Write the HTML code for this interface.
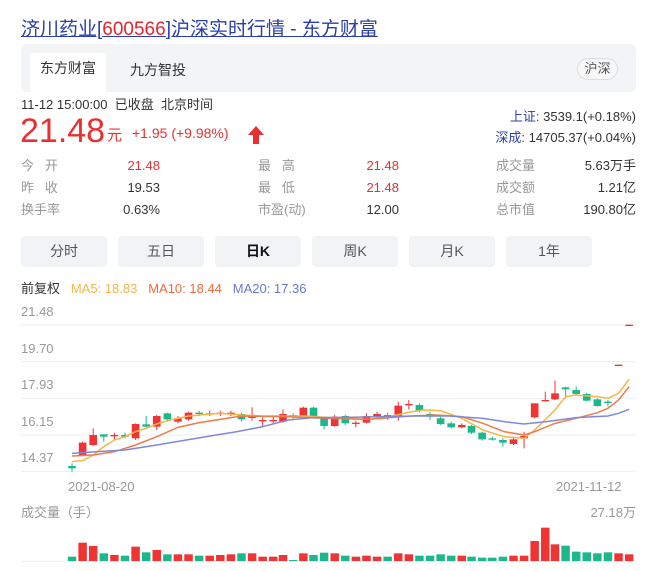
<!DOCTYPE html>
<html><head><meta charset="utf-8"><style>
*{margin:0;padding:0;box-sizing:border-box}
body{width:666px;height:571px;background:#fff;font-family:"Liberation Sans","Noto Sans CJK SC",sans-serif;color:#333;position:relative;overflow:hidden}
.a{position:absolute;white-space:nowrap}
.r{color:#e93030}.g{color:#999}
.tab{position:absolute;top:236px;width:86px;height:31px;background:#f2f3f5;border-radius:4px;text-align:center;line-height:31px;font-size:14px;color:#555}
</style></head><body>
<div class="a" style="left:21px;top:14px;font-size:19px;color:#2a3fa8;text-decoration:underline">济川药业[<span style="color:#e3262d">600566</span>]沪深实时行情 - 东方财富</div>
<div class="a" style="left:21px;top:44px;width:615px;height:48px;background:#f3f4f6;border-radius:6px"></div>
<div class="a" style="left:30px;top:53px;width:76px;height:39px;background:#fff;border-radius:5px 5px 0 0;text-align:center;line-height:31px;font-size:14px;color:#333">东方财富</div>
<div class="a" style="left:130px;top:60px;font-size:14px;color:#333">九方智投</div>
<div class="a" style="left:577px;top:58px;width:41px;height:22px;border:1px solid #ddd;border-radius:11px;background:#f7f7f7;text-align:center;line-height:20px;font-size:13px;color:#555">沪深</div>
<div class="a" style="left:21px;top:94px;font-size:13px;color:#333">11-12 15:00:00&nbsp; 已收盘&nbsp; 北京时间</div>
<div class="a r" style="left:20px;top:112px;font-size:34px;line-height:38px">21.48</div>
<div class="a r" style="left:107px;top:124px;font-size:15px">元</div>
<div class="a r" style="left:132px;top:125px;font-size:14px">+1.95 (+9.98%)</div>
<svg class="a" style="left:248px;top:126px" width="16" height="18" viewBox="0 0 16 18"><path d="M8 0L16 9H11V18H5V9H0Z" fill="#e93030"/></svg>
<div class="a" style="right:30px;top:106px;font-size:13px"><span style="color:#2a3fa8">上证:</span> 3539.1(+0.18%)</div>
<div class="a" style="right:30px;top:127px;font-size:13px"><span style="color:#2a3fa8">深成:</span> 14705.37(+0.04%)</div>
<div class="a g" style="left:21px;top:155px;font-size:13px;line-height:22px">今&nbsp;&nbsp;&nbsp;开<br>昨&nbsp;&nbsp;&nbsp;收<br>换手率</div>
<div class="a" style="right:506px;top:155px;font-size:13px;line-height:22px;text-align:right"><span class="r">21.48</span><br>19.53<br>0.63%</div>
<div class="a g" style="left:258px;top:155px;font-size:13px;line-height:22px">最&nbsp;&nbsp;&nbsp;高<br>最&nbsp;&nbsp;&nbsp;低<br>市盈(动)</div>
<div class="a" style="right:267px;top:155px;font-size:13px;line-height:22px;text-align:right"><span class="r">21.48</span><br><span class="r">21.48</span><br>12.00</div>
<div class="a g" style="left:496px;top:155px;font-size:13px;line-height:22px">成交量<br>成交额<br>总市值</div>
<div class="a" style="right:30px;top:155px;font-size:13px;line-height:22px;text-align:right">5.63万手<br>1.21亿<br>190.80亿</div>
<div class="tab" style="left:21px">分时</div>
<div class="tab" style="left:118px">五日</div>
<div class="tab" style="left:215px;color:#111;font-weight:bold">日K</div>
<div class="tab" style="left:312px">周K</div>
<div class="tab" style="left:409px">月K</div>
<div class="tab" style="left:506px">1年</div>
<div class="a" style="left:21px;top:278px;font-size:13px">前复权&nbsp;&nbsp; <span style="color:#f5b54a">MA5: 18.83</span>&nbsp;&nbsp; <span style="color:#f06a3a">MA10: 18.44</span>&nbsp;&nbsp; <span style="color:#6a78d0">MA20: 17.36</span></div>
<div class="a g" style="left:21px;top:304px;font-size:13px;line-height:16px">21.48</div>
<div class="a g" style="left:21px;top:341px;font-size:13px;line-height:16px">19.70</div>
<div class="a g" style="left:21px;top:377px;font-size:13px;line-height:16px">17.93</div>
<div class="a g" style="left:21px;top:414px;font-size:13px;line-height:16px">16.15</div>
<div class="a g" style="left:21px;top:450px;font-size:13px;line-height:16px">14.37</div>
<div class="a g" style="left:68px;top:479px;font-size:13px;line-height:16px">2021-08-20</div>
<div class="a g" style="left:556px;top:479px;font-size:13px;line-height:16px">2021-11-12</div>
<div class="a g" style="left:21px;top:505px;font-size:13px;line-height:16px">成交量（手）</div>
<div class="a g" style="right:30px;top:505px;font-size:13px;line-height:16px">27.18万</div>
<svg id="c" class="a" style="left:0;top:290px" width="666" height="281" viewBox="0 0 1572 843" preserveAspectRatio="none"></svg>
<script>
var s='';
[105,215,325,435,545].forEach(function(y){s+='<line x1="50" x2="1500" y1="'+y+'" y2="'+y+'" stroke="#eee" vector-effect="non-scaling-stroke"/>';});
s+='<line x1="50" x2="1500" y1="814" y2="814" stroke="#eee" vector-effect="non-scaling-stroke"/>';
var R='#f03434',G='#1ab88a';
var d=[[170,528,535,520,545,0],[195,458,495,455,498,1],[220,435,465,415,468,1],[245,433,440,433,455,0],[270,435,438,428,450,1],[295,435,440,428,445,0],[320,402,445,400,450,1],[345,403,410,378,412,0],[370,378,410,375,420,1],[395,370,388,368,395,0],[420,385,395,378,400,1],[445,368,388,365,392,1],[470,368,372,362,378,0],[495,370,373,362,378,1],[520,368,372,362,378,1],[545,368,372,362,378,1],[570,372,388,368,395,0],[595,380,383,352,392,1],[620,390,393,382,408,1],[645,390,394,380,400,1],[668,372,395,358,398,1],[692,375,380,370,390,0],[716,353,378,350,380,1],[740,353,378,350,380,0],[765,385,408,380,418,0],[790,380,408,375,410,1],[815,378,400,375,405,0],[840,398,402,392,412,1],[865,378,398,370,400,1],[890,372,380,365,385,1],[915,375,382,368,390,0],[940,347,378,335,392,1],[965,342,346,330,358,1],[990,345,362,340,368,0],[1015,372,380,365,390,0],[1040,385,402,380,405,0],[1065,400,412,395,415,0],[1090,405,412,400,415,1],[1113,408,428,405,432,0],[1138,428,448,425,452,0],[1162,445,448,440,452,0],[1187,450,458,445,470,0],[1212,448,462,440,465,1],[1237,438,445,425,475,1],[1262,340,382,340,385,1],[1287,330,333,305,335,1],[1310,310,328,272,330,1],[1335,292,298,290,325,0],[1360,300,312,290,315,0],[1385,312,332,308,335,0],[1410,328,348,325,350,0],[1435,335,338,330,350,0],[1460,224,228,224,228,1],[1485,104,108,104,108,1]];
d.forEach(function(c){var col=c[5]?R:G;s+='<line x1="'+c[0]+'" x2="'+c[0]+'" y1="'+c[3]+'" y2="'+c[4]+'" stroke="'+col+'" vector-effect="non-scaling-stroke"/>';s+='<rect x="'+(c[0]-9)+'" y="'+c[1]+'" width="18" height="'+Math.max(4,c[2]-c[1])+'" fill="'+col+'"/>';});
function pl(p,col){s+='<polyline fill="none" stroke="'+col+'" stroke-width="1.5" vector-effect="non-scaling-stroke" points="'+p.map(function(q){return q.join(',')}).join(' ')+'"/>';}
pl([[170,515],[195,512],[220,495],[245,470],[270,450],[295,440],[320,425],[345,415],[370,402],[395,392],[420,385],[445,378],[470,375],[520,370],[570,375],[620,378],[670,378],[720,378],[770,382],[820,385],[870,388],[920,380],[960,368],[1000,360],[1040,362],[1090,385],[1140,420],[1190,440],[1237,445],[1262,420],[1310,360],[1335,320],[1360,315],[1410,320],[1435,325],[1460,310],[1485,268]],'#f5b54a');
pl([[170,498],[220,495],[270,485],[320,465],[370,440],[420,412],[470,398],[520,388],[570,378],[670,380],[770,385],[870,388],[970,378],[1030,375],[1090,380],[1140,400],[1190,425],[1237,435],[1262,425],[1310,400],[1360,385],[1410,368],[1435,355],[1460,330],[1485,290]],'#f07a4a');
pl([[170,490],[230,485],[295,480],[370,465],[440,450],[510,435],[560,425],[620,410],[680,390],[740,383],[820,382],[900,380],[980,378],[1060,378],[1140,385],[1190,395],[1237,402],[1290,395],[1360,383],[1435,378],[1460,370],[1485,358]],'#8088dc');
var v=[800,758,768,790,795,797,770,787,780,793,793,793,797,797,795,793,790,790,800,800,795,810,790,795,788,790,797,800,797,800,800,790,793,797,797,793,797,797,800,803,803,800,797,797,753,713,763,767,785,787,790,787,790,793];
v.forEach(function(t,i){var c=d[i];s+='<rect x="'+(c[0]-10)+'" y="'+t+'" width="20" height="'+(813-t)+'" fill="'+(c[5]?R:G)+'"/>';});
document.getElementById('c').innerHTML=s;
</script>
</body></html>
